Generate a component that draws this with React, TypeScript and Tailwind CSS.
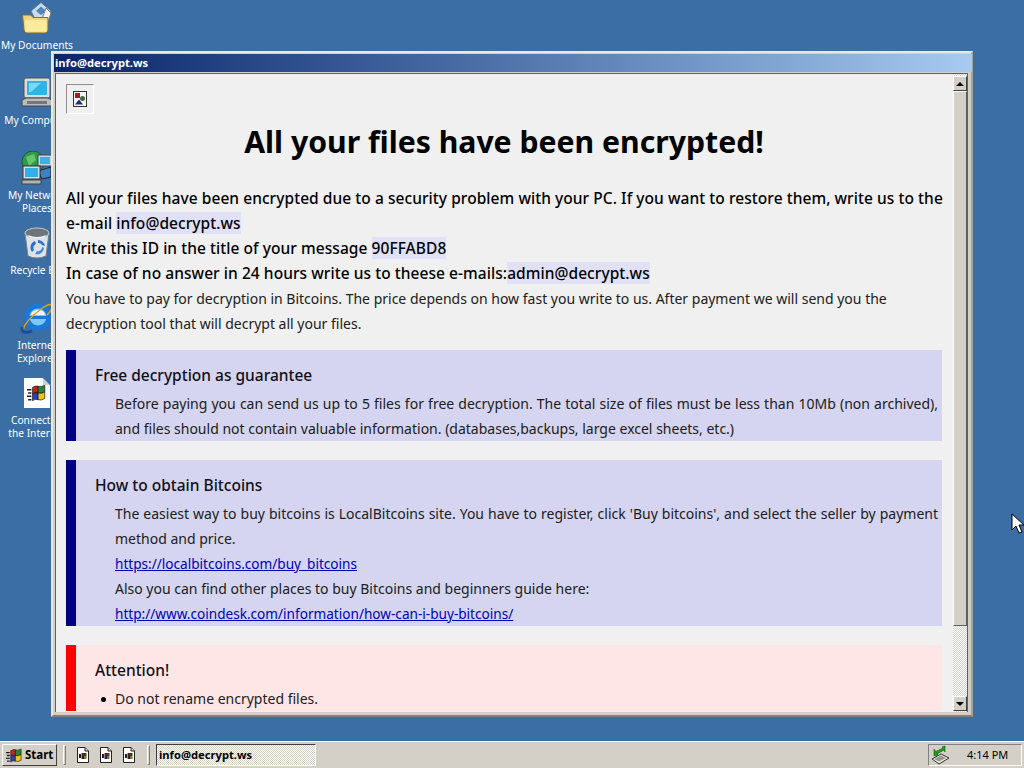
import type { ReactNode } from "react";

function Folder() {
  return (
    <svg width="32" height="32" viewBox="0 0 32 32">
      <path d="M10 9 L20 0.5 L30 9 L26 17 H14 Z" fill="#c9dbec" stroke="#5b7c99" />
      <path d="M15 9 L20 4.5 L25 9 L20 13 Z" fill="#4f86bb" />
      <path d="M25 6 L30 11 L27 20 L21 17 Z" fill="#f4f4f4" stroke="#777" />
      <path d="M1.5 13 H10 L12 15.5 H27 V28 Q27 31 24 31 H6 Q3 31 3 28 Z" fill="#efd77f" stroke="#7f7038" />
      <path d="M4 18 H25.5 V28 Q25.5 29.5 24 29.5 H6 Q4.5 29.5 4.5 28 Z" fill="#fbeb9c" />
    </svg>
  );
}

function Computer() {
  return (
    <svg width="32" height="32" viewBox="0 0 32 32">
      <rect x="3" y="1" width="26" height="20" rx="2" fill="#d8dce0" stroke="#555" />
      <rect x="6" y="4" width="20" height="14" rx="1" fill="#2fb4e8" />
      <path d="M8 6 H20 L10 15 H8 Z" fill="#7fd8f5" />
      <path d="M1 23 L5 21 H27 L31 23 V29 H1 Z" fill="#b8bcc0" stroke="#444" />
      <rect x="6" y="24" width="20" height="3" fill="#777" />
    </svg>
  );
}

function Network() {
  return (
    <svg width="34" height="34" viewBox="0 0 34 34">
      <circle cx="13" cy="11" r="11" fill="#2e9a4c" stroke="#1b5e34" />
      <path d="M6 6 L14 3 L16 9 L9 15 Z" fill="#6cc36f" />
      <path d="M14 14 L21 12 L20 20 L15 21 Z" fill="#2a7ac8" />
      <rect x="18" y="4" width="14" height="11" fill="#cfd6dc" stroke="#445" />
      <rect x="20" y="6" width="10" height="7" fill="#39b2e6" />
      <path d="M18 20 L31 16 V26 L22 28 Z" fill="#3b7fc4" stroke="#223" />
      <rect x="3" y="15" width="17" height="13" fill="#d8dde2" stroke="#333" />
      <rect x="5" y="17" width="13" height="9" fill="#2fb0e8" />
      <rect x="2" y="29" width="19" height="4" fill="#b0b4b8" stroke="#444" />
    </svg>
  );
}

function Recycle() {
  return (
    <svg width="28" height="32" viewBox="0 0 28 32">
      <path d="M2 6 L5 29 Q14 33 23 29 L26 6 Z" fill="#dfe3e6" stroke="#7a8288" />
      <ellipse cx="14" cy="6" rx="12" ry="5" fill="#6e7478" stroke="#c8ccd0" />
      <path d="M5 8 Q14 12 23 8 L22 10 Q14 13 6 10 Z" fill="#f0f0f0" />
      <path d="M15 13 A7 7 0 0 1 22 19 L19 18 A4 4 0 0 0 15 16 Z" fill="#2e6fcc" />
      <path d="M21 21 A7 7 0 0 1 12 27 L14 24 A4 4 0 0 0 19 20 Z" fill="#3f8be0" />
      <path d="M9 25 A7 7 0 0 1 12 14 L13 17 A4 4 0 0 0 11 23 Z" fill="#2e6fcc" />
    </svg>
  );
}

function Explorer() {
  return (
    <svg width="34" height="34" viewBox="0 0 34 34">
      <circle cx="18" cy="16" r="11" fill="#7cc8f8" stroke="#1a78d8" strokeWidth="5" />
      <path d="M8 15 H28 V18 H8 Z" fill="#1a78d8" />
      <path d="M10 21 Q15 29 25 23 L29 21 V25 Q18 33 9 24 Z" fill="#1a78d8" />
      <path d="M12 11 Q18 7 24 11 L25 14 H11 Z" fill="#f0f8ff" />
      <path d="M3 29 Q5 20 21 8 Q31 1 32 5 Q33 8 27 14" fill="none" stroke="#d8a020" strokeWidth="1.5" />
      <path d="M2 26 Q1 34 12 30" fill="none" stroke="#1a4f9c" strokeWidth="3" />
    </svg>
  );
}

function WinFlag({ size = 18 }: { size?: number }) {
  return (
    <svg width={size} height={size} viewBox="0 0 18 18">
      <path d="M5 4 Q8 2 10 3 V9 Q7 8 5 10 Z" fill="#c8201c" stroke="#111" strokeWidth="0.6" />
      <path d="M10 3 Q13 4 16 2 V8 Q13 10 10 9 Z" fill="#1f8a30" stroke="#111" strokeWidth="0.6" />
      <path d="M5 10 Q7 8 10 9 V15 Q7 14 5 16 Z" fill="#2a40b8" stroke="#111" strokeWidth="0.6" />
      <path d="M10 9 Q13 10 16 8 V14 Q13 16 10 15 Z" fill="#f0c41e" stroke="#111" strokeWidth="0.6" />
      <path d="M0 6 H4 M1 9 H4 M0 12 H4 M1 15 H4" stroke="#222" strokeWidth="1.4" />
    </svg>
  );
}

function DocIcon({ size = 16 }: { size?: number }) {
  return (
    <svg width={size} height={size} viewBox="0 0 16 16">
      <path d="M2.5 0.5 H10 L13.5 4 V15.5 H2.5 Z" fill="#fff" stroke="#222" />
      <path d="M10 0.5 V4 H13.5" fill="#ccc" stroke="#222" />
      <path d="M4 7 H6 V11 H4 Z" fill="#222" />
      <path d="M6.5 6 H9 V9 H6.5 Z" fill="#701818" />
      <path d="M9 6 H11.5 V9 H9 Z" fill="#205020" />
      <path d="M6.5 9 H9 V12 H6.5 Z" fill="#202060" />
      <path d="M9 9 H11.5 V12 H9 Z" fill="#907010" />
    </svg>
  );
}

function ConnectIcon() {
  return (
    <div className="relative w-[26px] h-[30px] bg-white flex items-center justify-center">
      <WinFlag size={20} />
      <span className="absolute right-0 top-0 w-0 h-0 border-t-[7px] border-l-[7px] border-t-[#3a6ea5] border-l-[#d4d0c8]" />
    </div>
  );
}

function BrokenImage() {
  return (
    <svg width="14" height="16" viewBox="0 0 14 16">
      <rect x="0.5" y="0.5" width="13" height="15" fill="#f4f4f4" stroke="#333" />
      <rect x="2" y="2" width="5" height="5" fill="#a81c1c" />
      <circle cx="9.5" cy="7.5" r="2.5" fill="#3f6a3f" />
      <path d="M2 13.5 L6 8.5 L10 13.5 Z" fill="#1a2a80" />
    </svg>
  );
}

function TrayIcon() {
  return (
    <svg width="20" height="20" viewBox="0 0 20 20">
      <path d="M1 14 L10 9 L18 13 L8 19 Z" fill="#e8e8e0" stroke="#333" />
      <path d="M3 14 L10 10.5 L15 13 L8 16.5 Z" fill="#9a9a90" />
      <path d="M14 1 L11 2 L12 3 L4 7 L6 9 L13 5 L14 7 Z" fill="#1ea01e" stroke="#0c5c0c" strokeWidth="0.6" />
      <path d="M3 4 L7 10 L3 11 Z" fill="#1ea01e" stroke="#0c5c0c" strokeWidth="0.6" />
    </svg>
  );
}

function DeskIcon({ y, icon, label }: { y: number; icon: ReactNode; label: string[] }) {
  return (
    <div className="absolute left-0 w-[74px] flex flex-col items-center text-white text-[10.2px] leading-[13px]" style={{ top: y }}>
      <div className="h-[32px] flex items-center justify-center">{icon}</div>
      <div className="mt-[5px] text-center whitespace-nowrap">
        {label.map((l) => (
          <div key={l}>{l}</div>
        ))}
      </div>
    </div>
  );
}

function Mail({ children }: { children: ReactNode }) {
  return <span className="bg-[#e0e0f6]">{children}</span>;
}

function Block({ bar, bg, title, children }: { bar: string; bg: string; title: string; children: ReactNode }) {
  return (
    <div className={`border-l-[10px] ${bar} ${bg} pl-[19px] pr-[4px] pt-[13px] mb-[19px]`}>
      <div className="font-medium text-[15.5px] text-[#101018] leading-[25px]">{title}</div>
      <div className="pl-[20px] pt-[3px] text-justify">{children}</div>
    </div>
  );
}

function ScrollButton({ up }: { up?: boolean }) {
  return (
    <div className="h-[15px] shrink-0 bg-[#d4d0c8] border border-t-white border-l-white border-r-[#404040] border-b-[#404040] flex items-center justify-center">
      <div className={`w-0 h-0 border-x-[4px] border-x-transparent ${up ? "border-b-[4px] border-b-black" : "border-t-[4px] border-t-black"}`} />
    </div>
  );
}

export default function App() {
  const dither = "bg-[repeating-conic-gradient(#ffffff_0_25%,#d4d0c8_0_50%)] bg-[length:2px_2px]";
  return (
    <div className="relative w-[1024px] h-[768px] overflow-hidden bg-[#3a6ea5] font-['Noto_Sans',sans-serif] flex flex-col">
      {/* desktop */}
      <div className="flex-1 relative">
        <DeskIcon y={2} icon={<Folder />} label={["My Documents"]} />
        <DeskIcon y={77} icon={<Computer />} label={["My Computer"]} />
        <DeskIcon y={152} icon={<Network />} label={["My Network", "Places"]} />
        <DeskIcon y={227} icon={<Recycle />} label={["Recycle Bin"]} />
        <DeskIcon y={302} icon={<Explorer />} label={["Internet", "Explorer"]} />
        <DeskIcon y={377} icon={<ConnectIcon />} label={["Connect to", "the Internet"]} />

        {/* window */}
        <div className="absolute left-[51px] top-[51px] w-[922px] h-[666px] bg-[#d4d0c8] border-t-2 border-l-2 border-t-[#e8e8e4] border-l-[#e8e8e4] border-r-2 border-b-2 border-r-[#a0a09c] border-b-[#808080] p-[1px] flex flex-col">
          <div className="h-[18px] shrink-0 -mr-[2px] bg-gradient-to-r from-[#0a246a] to-[#a6caf0] text-white text-[11.2px] font-bold leading-[18px] pl-[1px]">
            info@decrypt.ws
          </div>
          <div className="flex-1 mt-[1px] ml-[1px] mr-[2px] mb-[2px] flex min-h-0 border-t border-l border-[#606060]">
            <div className="flex-1 bg-[#f0f0f0] overflow-hidden pl-[10px] pr-[11px] pt-[10px] text-[14px] leading-[25px] text-[#202020]">
              <div className="w-[28px] h-[30px] border border-t-[#909090] border-l-[#909090] border-r-white border-b-white flex items-center justify-center">
                <BrokenImage />
              </div>
              <h1 className="text-[30.2px] font-bold text-center text-black leading-[40px] mt-[8px] mb-[24px]">All your files have been encrypted!</h1>
              <div className="font-medium text-[15.5px] tracking-[0.06px] text-black">
                <div className="whitespace-nowrap">All your files have been encrypted due to a security problem with your PC. If you want to restore them, write us to the</div>
                <div>e-mail <Mail>info@decrypt.ws</Mail></div>
                <div>Write this ID in the title of your message <Mail>90FFABD8</Mail></div>
                <div>In case of no answer in 24 hours write us to theese e-mails:<Mail>admin@decrypt.ws</Mail></div>
              </div>
              <div>You have to pay for decryption in Bitcoins. The price depends on how fast you write to us. After payment we will send you the decryption tool that will decrypt all your files.</div>
              <div className="h-[14px]" />
              <Block bar="border-l-[#000080]" bg="bg-[#d5d5f1]" title="Free decryption as guarantee">
                Before paying you can send us up to 5 files for free decryption. The total size of files must be less than 10Mb (non archived), and files should not contain valuable information. (databases,backups, large excel sheets, etc.)
              </Block>
              <Block bar="border-l-[#000080]" bg="bg-[#d5d5f1]" title="How to obtain Bitcoins">
                <div>The easiest way to buy bitcoins is LocalBitcoins site. You have to register, click 'Buy bitcoins', and select the seller by payment method and price.</div>
                <div className="text-[#0000c0] underline text-[13.6px]">https://localbitcoins.com/buy_bitcoins</div>
                <div>Also you can find other places to buy Bitcoins and beginners guide here:</div>
                <div className="text-[#0000c0] underline text-[13.6px]">http://www.coindesk.com/information/how-can-i-buy-bitcoins/</div>
              </Block>
              <Block bar="border-l-[#ff0000]" bg="bg-[#ffe6e6]" title="Attention!">
                <div className="relative">
                  <span className="absolute left-[-14px] top-[11px] w-[5px] h-[5px] rounded-full bg-black" />
                  Do not rename encrypted files.
                </div>
              </Block>
            </div>
            <div className={`w-[15px] shrink-0 pt-[2px] pb-[1px] flex flex-col border-r border-r-[#606060] ${dither}`}>
              <ScrollButton up />
              <div className="h-[535px] shrink-0 bg-[#d4d0c8] border border-t-white border-l-white border-r-[#606060] border-b-[#606060]" />
              <div className="flex-1" />
              <ScrollButton />
            </div>
          </div>
        </div>

        {/* cursor */}
        <svg className="absolute left-[1011px] top-[513px]" width="13" height="21" viewBox="0 0 13 21">
          <path d="M1 1 V17 L5 13 L8 20 L11 19 L8 12 H13 Z" fill="#fff" stroke="#000" />
        </svg>
      </div>

      {/* taskbar */}
      <div className="h-[27px] shrink-0 bg-[#d4d0c8] border-t border-t-white flex items-center pl-[2px] pr-[2px] text-[11px] text-black">
        <div className="h-[22px] w-[55px] border border-t-white border-l-white border-r-[#404040] border-b-[#404040] flex items-center pl-[3px] gap-[2px] font-bold text-[11.5px]">
          <WinFlag size={17} />
          Start
        </div>
        <div className="w-[3px] h-[20px] ml-[6px] border border-t-white border-l-white border-r-[#808080] border-b-[#808080]" />
        <div className="flex ml-[9px] gap-[7px] w-[72px] shrink-0 items-center">
          <DocIcon />
          <DocIcon />
          <DocIcon />
        </div>
        <div className="w-[3px] h-[20px] border border-t-white border-l-white border-r-[#808080] border-b-[#808080]" />
        <div className={`ml-[6px] w-[160px] h-[22px] border border-t-[#404040] border-l-[#404040] border-r-white border-b-white flex items-center pl-[2px] pt-[1px] font-bold text-[11.2px] ${dither}`}>
          info@decrypt.ws
        </div>
        <div className="ml-auto w-[94px] h-[22px] border border-t-[#808080] border-l-[#808080] border-r-white border-b-white flex items-center pl-[2px]">
          <TrayIcon />
          <span className="ml-[16px]">4:14 PM</span>
        </div>
      </div>
    </div>
  );
}
